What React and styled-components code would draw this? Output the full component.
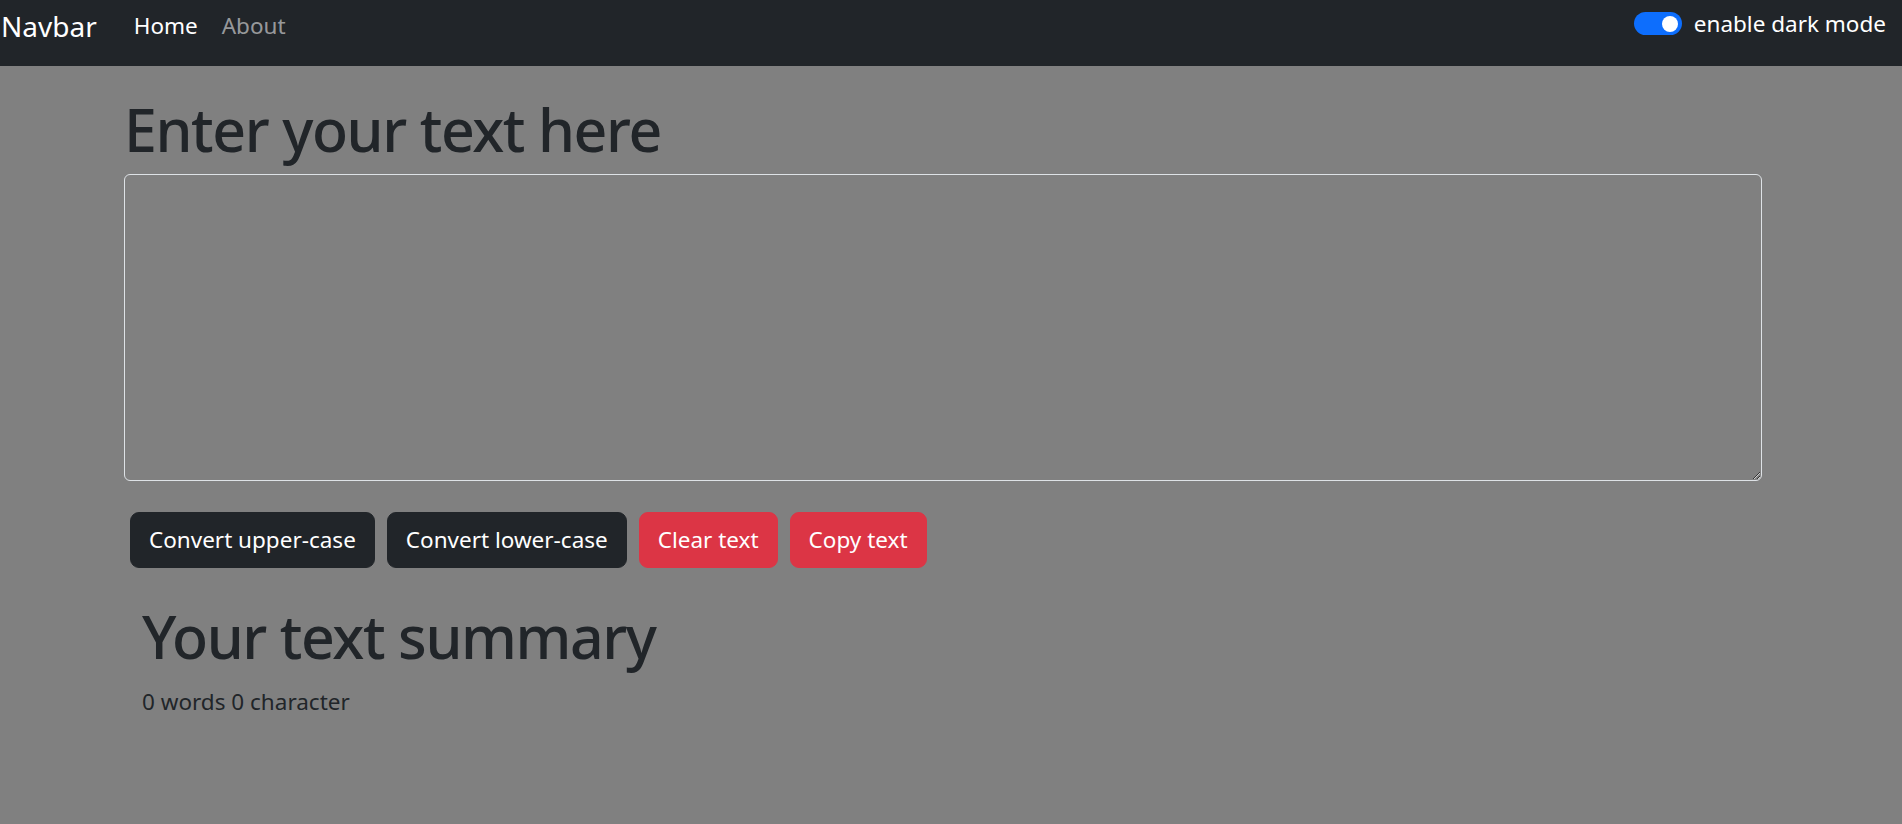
import React, { useState } from "react";
import styled, { createGlobalStyle } from "styled-components";

const GlobalStyle = createGlobalStyle`
  * { box-sizing: border-box; }
  html, body { margin: 0; padding: 0; }
  body {
    background: #808080;
    font-family: "Noto Sans", "Open Sans", sans-serif;
    color: #212529;
  }
`;

const NavBar = styled.nav`
  height: 66px;
  background: #212529;
  display: flex;
  align-items: flex-start;
  padding: 0 16px 0 1px;
`;

const Brand = styled.a`
  font-size: 28px;
  line-height: 42px;
  margin-top: 5px;
  margin-right: 25px;
  color: #fff;
  text-decoration: none;
`;

const NavList = styled.ul`
  display: flex;
  list-style: none;
  margin: 9px 0 0 0;
  padding: 0;
`;

const NavLink = styled.a`
  display: block;
  padding: 0 12px;
  font-size: 22.5px;
  line-height: 34px;
  text-decoration: none;
  color: ${(p) => (p.$active ? "#fff" : "rgba(255,255,255,0.55)")};
`;

const SwitchWrap = styled.label`
  margin-left: auto;
  margin-top: 7px;
  display: flex;
  align-items: flex-start;
  gap: 12px;
  cursor: pointer;
`;

const Switch = styled.span`
  margin-top: 5px;
  width: 48px;
  height: 23px;
  border-radius: 12px;
  background: #0d6efd;
  display: flex;
  align-items: center;
  justify-content: ${(p) => (p.$on ? "flex-end" : "flex-start")};
  padding: 0 4px;
`;

const Knob = styled.span`
  width: 16px;
  height: 16px;
  border-radius: 50%;
  background: #fff;
`;

const SwitchLabel = styled.span`
  font-size: 22.5px;
  line-height: 34px;
  color: #fff;
`;

const Main = styled.main`
  padding: 28px 140px 0 124px;
`;

const Heading = styled.h1`
  margin: 0 0 9px 0;
  font-size: 59px;
  font-weight: 500;
  letter-spacing: -1.4px;
  line-height: 1.2;
  color: #212529;
`;

const TextBox = styled.textarea`
  display: block;
  width: 100%;
  height: 307px;
  border: 1px solid #dee2e6;
  border-radius: 6px;
  background: transparent;
  color: #212529;
  font-family: inherit;
  font-size: 22.5px;
  padding: 9px 18px;
  resize: vertical;
  outline: none;
`;

const ButtonRow = styled.div`
  display: flex;
  gap: 12px;
  padding-left: 6px;
  margin-top: 31px;
`;

const Button = styled.button`
  height: 56px;
  padding: 0 18px;
  font-family: inherit;
  font-size: 22.5px;
  color: #fff;
  background: ${(p) => (p.$variant === "danger" ? "#dc3545" : "#212529")};
  border: 1.5px solid ${(p) => (p.$variant === "danger" ? "#dc3545" : "#212529")};
  border-radius: 9px;
  cursor: pointer;
`;

const Summary = styled.section`
  padding-left: 18px;
  margin-top: 33px;
`;

const SummaryHeading = styled(Heading)`
  margin: 0 0 13px 0;
`;

const SummaryText = styled.p`
  margin: 0;
  font-size: 22.5px;
  line-height: 34px;
  color: #212529;
`;

export default function App() {
  const [text, setText] = useState("");
  const words = text.split(/\s+/).filter(Boolean).length;
  return (
    <>
      <GlobalStyle />
      <NavBar>
        <Brand href="#">Navbar</Brand>
        <NavList>
          <li><NavLink href="#" $active>Home</NavLink></li>
          <li><NavLink href="#">About</NavLink></li>
        </NavList>
        <SwitchWrap>
          <Switch $on>
            <Knob />
          </Switch>
          <SwitchLabel>enable dark mode</SwitchLabel>
        </SwitchWrap>
      </NavBar>
      <Main>
        <Heading>Enter your text here</Heading>
        <TextBox value={text} onChange={(e) => setText(e.target.value)} />
        <ButtonRow>
          <Button onClick={() => setText(text.toUpperCase())}>Convert upper-case</Button>
          <Button onClick={() => setText(text.toLowerCase())}>Convert lower-case</Button>
          <Button $variant="danger" onClick={() => setText("")}>Clear text</Button>
          <Button $variant="danger">Copy text</Button>
        </ButtonRow>
        <Summary>
          <SummaryHeading>Your text summary</SummaryHeading>
          <SummaryText>{words} words {text.length} character</SummaryText>
        </Summary>
      </Main>
    </>
  );
}
